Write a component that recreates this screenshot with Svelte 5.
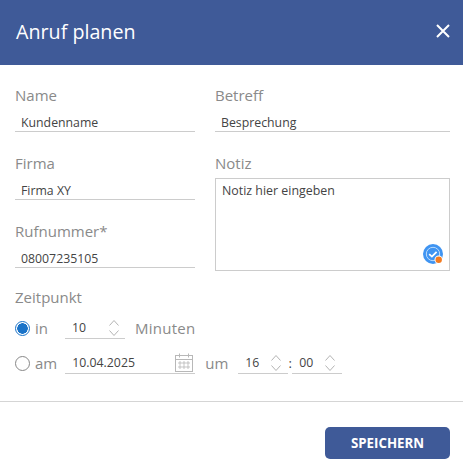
<script>
	let minutes = 10;
	let hour = 16;
	let minute = '00';
</script>

{#snippet spinner()}
	<svg class="spin" width="12" height="20" viewBox="0 0 12 20" fill="none" stroke="#b4b4b4" stroke-width="1">
		<path d="M1.5 7.5 6 2.5l4.5 5" />
		<path d="M1.5 12.5 6 17.5l4.5-5" />
	</svg>
{/snippet}

<div class="dialog">
	<header class="head">
		<h1>Anruf planen</h1>
		<svg class="close" width="16" height="16" viewBox="0 0 16 16" stroke="#fff" stroke-width="2">
			<path d="M2 2l12 12M14 2 2 14" />
		</svg>
	</header>

	<div class="body">
		<div class="columns">
			<div class="col left">
				<div class="field">
					<div class="label">Name</div>
					<div class="input">Kundenname</div>
				</div>
				<div class="field">
					<div class="label">Firma</div>
					<div class="input">Firma XY</div>
				</div>
				<div class="field">
					<div class="label">Rufnummer*</div>
					<div class="input">08007235105</div>
				</div>
			</div>
			<div class="col right">
				<div class="field">
					<div class="label">Betreff</div>
					<div class="input">Besprechung</div>
				</div>
				<div class="field">
					<div class="label">Notiz</div>
					<div class="note">
						Notiz hier eingeben
						<svg class="badge" width="20" height="20" viewBox="0 0 20 20">
							<circle cx="10" cy="10" r="10" fill="#3f94f2" />
							<circle cx="10" cy="10" r="6.7" fill="none" stroke="#bcdcfb" stroke-width="1" />
							<path d="M6.2 10.2 8.9 12.6 13.6 7.8" fill="none" stroke="#fff" stroke-width="1.8" />
							<circle cx="15.7" cy="15.7" r="4.2" fill="#fff" />
							<circle cx="15.7" cy="15.7" r="3.2" fill="#f47b20" />
						</svg>
					</div>
				</div>
			</div>
		</div>

		<div class="when">
			<div class="label">Zeitpunkt</div>
			<div class="row first">
				<span class="radio checked"></span>
				<span class="opt">in</span>
				<div class="num minutes"><span>{minutes}</span>{@render spinner()}</div>
				<span class="opt unit">Minuten</span>
			</div>
			<div class="row">
				<span class="radio"></span>
				<span class="opt">am</span>
				<div class="num date">
					<span>10.04.2025</span>
					<svg width="18" height="19" viewBox="0 0 18 19" fill="none" stroke="#b8b8b8">
						<rect x="0.5" y="2.5" width="17" height="16" />
						<path d="M0.5 6.5h17M4.5 0.5v4M13.5 0.5v4" />
						<path d="M4 9h2v2H4zM8 9h2v2H8zM12 9h2v2h-2zM4 13h2v2H4zM8 13h2v2H8zM12 13h2v2h-2z" stroke-width="0.8" />
					</svg>
				</div>
				<span class="opt um">um</span>
				<div class="num time"><span>{hour}</span>{@render spinner()}</div>
				<span class="colon">:</span>
				<div class="num time"><span>{minute}</span>{@render spinner()}</div>
			</div>
		</div>
	</div>

	<footer class="foot">
		<button type="button" class="save">SPEICHERN</button>
	</footer>
</div>

<style>
	:global(body) {
		background: #fff;
	}

	.dialog {
		width: 463px;
		height: 468px;
		overflow: hidden;
		font-family: "Open Sans", sans-serif;
		color: #444;
	}

	.head {
		height: 65px;
		box-sizing: border-box;
		padding: 0 12px 3px 16px;
		background: #3f5a98;
		display: flex;
		align-items: center;
		justify-content: space-between;
	}

	h1 {
		margin: 0;
		font-size: 19.7px;
		font-weight: 400;
		color: #fff;
	}

	.body {
		padding: 20px 13px 0 15px;
	}

	.columns {
		display: flex;
		gap: 20px;
	}

	.left {
		width: 180px;
	}

	.right {
		width: 235px;
	}

	.field {
		margin-bottom: 21px;
	}

	.label {
		height: 20px;
		line-height: 20px;
		font-size: 15px;
		color: #8a8a8a;
	}

	.input {
		height: 27px;
		padding: 8px 0 0 6px;
		box-sizing: border-box;
		line-height: 20px;
		font-size: 12.3px;
		border-bottom: 1px solid #ccc;
	}

	.note {
		position: relative;
		height: 93px;
		margin-top: 5px;
		padding: 2px 6px;
		box-sizing: border-box;
		line-height: 20px;
		font-size: 12.4px;
		border: 1px solid #ccc;
	}

	.badge {
		position: absolute;
		right: 6px;
		bottom: 6px;
	}

	.when {
		margin-top: -5px;
	}

	.row {
		display: flex;
		align-items: center;
		height: 22px;
		margin-top: 13px;
	}

	.row.first {
		margin-top: 10px;
	}

	.radio {
		width: 15px;
		height: 15px;
		box-sizing: border-box;
		border: 1px solid #888;
		border-radius: 50%;
		background: #fff;
	}

	.radio.checked {
		border-color: #1a73c8;
		background: radial-gradient(circle, #1a73c8 5px, #fff 5.5px);
	}

	.opt {
		margin-left: 5px;
		font-size: 15px;
		color: #8a8a8a;
	}

	.num {
		display: flex;
		align-items: center;
		justify-content: space-between;
		height: 100%;
		box-sizing: border-box;
		padding: 0 2px 0 7px;
		font-size: 12.3px;
		border-bottom: 1px solid #ccc;
	}

	.minutes {
		width: 60px;
		margin-left: 17px;
		padding-right: 5px;
	}

	.unit {
		margin-left: 10px;
		letter-spacing: 0.25px;
	}

	.date {
		width: 130px;
		margin-left: 8px;
		padding-left: 7px;
	}

	.um {
		margin-left: 10px;
	}

	.time {
		width: 50px;
		margin-left: 10px;
		padding-right: 6px;
	}

	.colon {
		width: 4px;
		text-align: center;
		font-size: 13px;
	}

	.colon + .time {
		margin-left: 0;
	}

	.foot {
		margin-top: 27px;
		padding: 25px 13px 0 0;
		border-top: 1px solid #d5d5d5;
		display: flex;
		justify-content: flex-end;
	}

	.save {
		width: 125px;
		height: 32px;
		border: none;
		border-radius: 5px;
		background: #3f5a98;
		color: #fff;
		font-family: inherit;
		font-size: 13.3px;
		font-weight: 700;
	}
</style>
